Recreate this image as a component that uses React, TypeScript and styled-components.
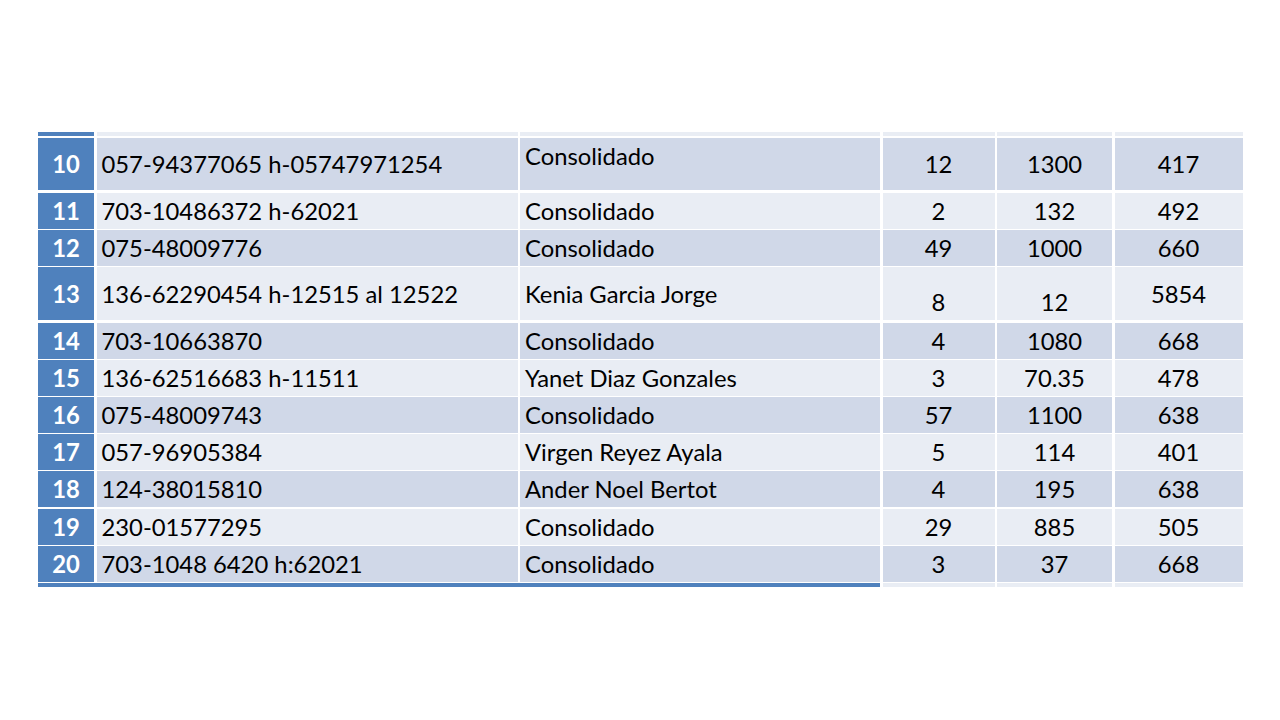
import React from "react";
import styled, { createGlobalStyle } from "styled-components";

const GlobalStyle = createGlobalStyle`
  html, body {
    margin: 0;
    padding: 0;
    background: #ffffff;
  }
  body {
    font-family: Lato, "Open Sans", "Liberation Sans", sans-serif;
  }
`;

const BLUE = "#4f81bd";
const DARK = "#d0d8e8";
const LIGHT = "#e9edf4";

const Slide = styled.div`
  width: 1280px;
  height: 720px;
  box-sizing: border-box;
  padding: 132px 0 0 38px;
  overflow: hidden;
`;

const Table = styled.div`
  width: 1204.5px;
  display: flex;
  flex-direction: column;
  gap: 2.6px;
`;

const Row = styled.div<{ h: number }>`
  display: grid;
  grid-template-columns: 56px 421px 360px 112px 115px 128px;
  column-gap: 2.5px;
  height: ${(p) => p.h}px;
`;

const Strip = styled.div<{ blue?: boolean; span?: number }>`
  background: ${(p) => (p.blue ? BLUE : LIGHT)};
  grid-column: span ${(p) => p.span ?? 1};
`;

type VAlign = "top" | "middle" | "bottom";

const Cell = styled.div<{
  shade: string;
  align?: "left" | "center";
  v?: VAlign;
}>`
  background: ${(p) => p.shade};
  display: flex;
  align-items: ${(p) =>
    p.v === "top" ? "flex-start" : p.v === "bottom" ? "flex-end" : "center"};
  justify-content: ${(p) => (p.align === "center" ? "center" : "flex-start")};
  padding: 3px 5px;
  box-sizing: border-box;
  font-size: 23.8px;
  line-height: 30px;
  color: #000000;
  white-space: nowrap;
`;

const IndexCell = styled.div`
  background: ${BLUE};
  display: flex;
  align-items: center;
  justify-content: center;
  font-size: 23.8px;
  font-weight: 700;
  color: #ffffff;
`;

type Line = {
  n: number;
  code: string;
  name: string;
  a: string;
  b: string;
  c: string;
  h: number;
  nameV?: VAlign;
  numV?: VAlign;
};

const rows: Line[] = [
  { n: 10, code: "057-94377065 h-05747971254", name: "Consolidado", a: "12", b: "1300", c: "417", h: 52, nameV: "top" },
  { n: 11, code: "703-10486372 h-62021", name: "Consolidado", a: "2", b: "132", c: "492", h: 34.5 },
  { n: 12, code: "075-48009776", name: "Consolidado", a: "49", b: "1000", c: "660", h: 34.5 },
  { n: 13, code: "136-62290454 h-12515 al 12522", name: "Kenia Garcia Jorge", a: "8", b: "12", c: "5854", h: 53.4, numV: "bottom" },
  { n: 14, code: "703-10663870", name: "Consolidado", a: "4", b: "1080", c: "668", h: 34.5 },
  { n: 15, code: "136-62516683 h-11511", name: "Yanet Diaz Gonzales", a: "3", b: "70.35", c: "478", h: 34.5 },
  { n: 16, code: "075-48009743", name: "Consolidado", a: "57", b: "1100", c: "638", h: 34.5 },
  { n: 17, code: "057-96905384", name: "Virgen Reyez Ayala", a: "5", b: "114", c: "401", h: 34.5 },
  { n: 18, code: "124-38015810", name: "Ander Noel Bertot", a: "4", b: "195", c: "638", h: 34.5 },
  { n: 19, code: "230-01577295", name: "Consolidado", a: "29", b: "885", c: "505", h: 34.5 },
  { n: 20, code: "703-1048 6420 h:62021", name: "Consolidado", a: "3", b: "37", c: "668", h: 34.5 },
];

export default function App() {
  return (
    <>
      <GlobalStyle />
      <Slide>
        <Table>
          <Row h={3.7}>
            <Strip blue />
            <Strip />
            <Strip />
            <Strip />
            <Strip />
            <Strip />
          </Row>
          {rows.map((r, i) => {
            const shade = i % 2 === 0 ? DARK : LIGHT;
            return (
              <Row key={r.n} h={r.h}>
                <IndexCell>{r.n}</IndexCell>
                <Cell shade={shade}>{r.code}</Cell>
                <Cell shade={shade} v={r.nameV}>
                  {r.name}
                </Cell>
                <Cell shade={shade} align="center" v={r.numV}>
                  {r.a}
                </Cell>
                <Cell shade={shade} align="center" v={r.numV}>
                  {r.b}
                </Cell>
                <Cell shade={shade} align="center">
                  {r.c}
                </Cell>
              </Row>
            );
          })}
          <Row h={4.4}>
            <Strip blue span={3} />
            <Strip />
            <Strip />
            <Strip />
          </Row>
        </Table>
      </Slide>
    </>
  );
}
